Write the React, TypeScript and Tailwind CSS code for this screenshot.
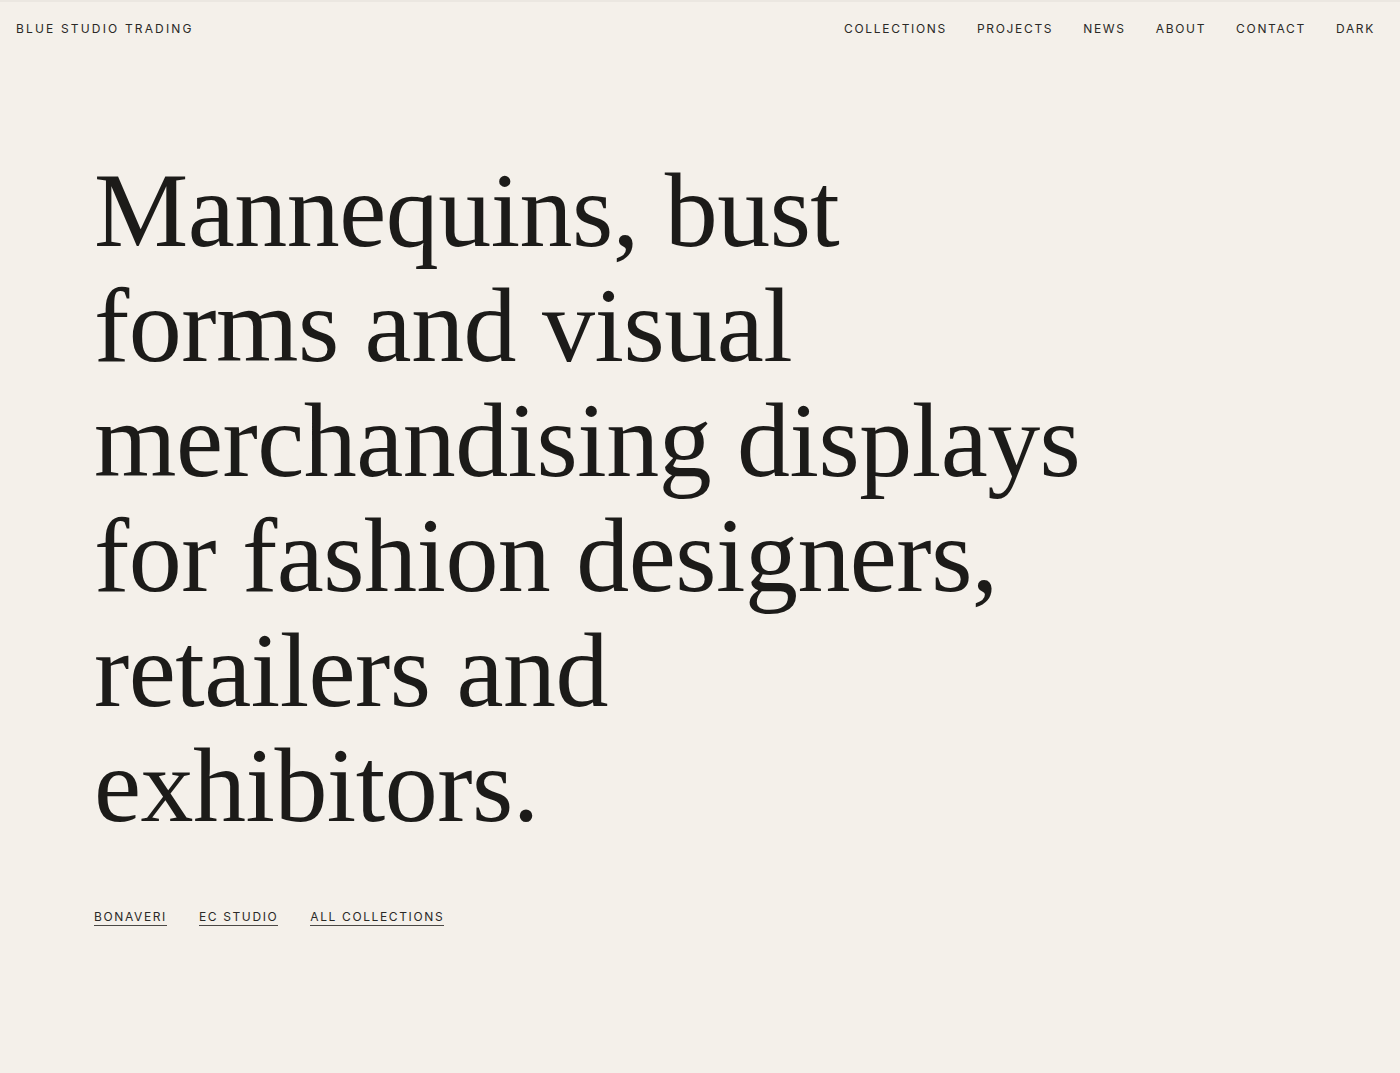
import React from "react";

const navItems = ["Collections", "Projects", "News", "About", "Contact", "Dark"];
const heroLines = [
  "Mannequins, bust",
  "forms and visual",
  "merchandising displays",
  "for fashion designers,",
  "retailers and",
  "exhibitors.",
];
const links = ["Bonaveri", "EC Studio", "All Collections"];

const App = () => {
  return (
    <div className="min-h-screen bg-[#f4f0ea] text-[#1c1b19] border-t-2 border-[#ebe7e1]">
      {/* Header */}
      <header className="flex items-center justify-between pl-4 pr-[25px] h-[54px] font-['Inter',sans-serif] text-[12px] uppercase text-[#2a2927]">
        <a href="#" className="leading-none tracking-[0.18em]">Blue Studio Trading</a>
        <nav className="flex items-center gap-[30px] tracking-[0.14em]">
          {navItems.map((item) => (
            <a key={item} href="#" className="leading-none">
              {item}
            </a>
          ))}
        </nav>
      </header>

      {/* Hero */}
      <main className="pl-[94px] pt-[97px]">
        <h1 className="font-['Liberation_Serif',serif] text-[106px] leading-[115px] font-normal tracking-[-0.005em] text-[#1c1b19]">
          {heroLines.map((line) => (
            <span key={line} className="block whitespace-nowrap">
              {line}
            </span>
          ))}
        </h1>

        <div className="flex items-center gap-[32px] mt-[68px] font-['Inter',sans-serif] text-[12px] uppercase tracking-[0.135em] text-[#2a2927]">
          {links.map((link) => (
            <a key={link} href="#" className="leading-none pb-[2px] border-b border-[#4a4845]">
              {link}
            </a>
          ))}
        </div>
      </main>
    </div>
  );
};

export default App;
